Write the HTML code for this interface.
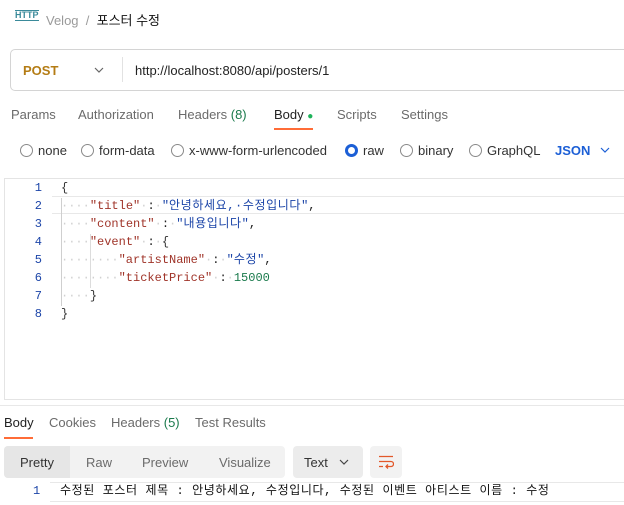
<!DOCTYPE html>
<html><head><meta charset="utf-8"><style>
*{margin:0;padding:0;box-sizing:border-box}
body{width:624px;height:505px;background:#fff;font-family:"Liberation Sans","Noto Sans CJK KR",sans-serif;font-size:13px;color:#212121;position:relative;overflow:hidden}
.a{position:absolute;white-space:nowrap}
.g{color:#6b6b6b}
.mono{font-family:"Liberation Mono","Noto Sans CJK KR",monospace;font-size:12px;line-height:18px}
.rad{display:inline-block;width:13px;height:13px;border:1px solid #8a8a8a;border-radius:50%;vertical-align:-2px;margin-right:5px}
.k{color:#a0352a}.s{color:#1c45a8}.n{color:#1a7a4c}.d{color:#d0d0d0}
.ko{letter-spacing:0.6px}
.ln{position:absolute;left:20px;width:22px;text-align:right;color:#1c45a8}
.cl{position:absolute;left:61px}
</style></head><body>
<div class="a" style="left:15px;top:10px;font-size:9px;color:#3a8a9a;font-weight:bold;border-top:1px solid #3a8a9a;border-bottom:1px solid #3a8a9a;line-height:9px">HTTP</div>
<div class="a" style="left:46px;top:10px;font-size:13px"><span style="color:#9a9a9a">Velog</span><span style="color:#9a9a9a">&nbsp; / &nbsp;</span><span style="color:#111">포스터 수정</span></div>

<div class="a" style="left:10px;top:49px;width:630px;height:42px;border:1px solid #d4d4d4;border-radius:5px"></div>
<div class="a" style="left:23px;top:63px;font-weight:bold;color:#b47c14">POST</div>
<svg class="a" style="left:94px;top:67px" width="10" height="6"><path d="M1 1l4 4 4-4" fill="none" stroke="#666" stroke-width="1.2"/></svg>
<div class="a" style="left:122px;top:57px;width:1px;height:25px;background:#e2e2e2"></div>
<div class="a" style="left:135px;top:63px;color:#222">http://localhost:8080/api/posters/1</div>

<div class="a g" style="left:11px;top:107px">Params</div>
<div class="a g" style="left:78px;top:107px">Authorization</div>
<div class="a g" style="left:178px;top:107px">Headers <span style="color:#1a7a4c">(8)</span></div>
<div class="a" style="left:274px;top:107px;color:#222">Body <span style="color:#1eb35a;font-size:10px">●</span></div>
<div class="a" style="left:274px;top:128px;width:39px;height:2px;background:#ff6c37"></div>
<div class="a g" style="left:337px;top:107px">Scripts</div>
<div class="a g" style="left:401px;top:107px">Settings</div>

<div class="a" style="left:20px;top:143px;color:#333"><span class="rad"></span>none</div>
<div class="a" style="left:81px;top:143px;color:#333"><span class="rad"></span>form-data</div>
<div class="a" style="left:171px;top:143px;color:#333"><span class="rad"></span>x-www-form-urlencoded</div>
<div class="a" style="left:345px;top:143px;color:#333"><span class="rad" style="border:3.5px solid #1c5fd6"></span>raw</div>
<div class="a" style="left:400px;top:143px;color:#333"><span class="rad"></span>binary</div>
<div class="a" style="left:469px;top:143px;color:#333"><span class="rad"></span>GraphQL</div>
<div class="a" style="left:555px;top:143px;color:#1c5fd6;font-weight:bold">JSON</div>
<svg class="a" style="left:600px;top:147px" width="10" height="6"><path d="M1 1l4 4 4-4" fill="none" stroke="#1c5fd6" stroke-width="1.2"/></svg>

<div class="a" style="left:4px;top:178px;width:640px;height:222px;border:1px solid #e4e4e4"></div>
<div class="a" style="left:52px;top:196px;width:600px;height:18px;border-top:1px solid #e8e8e8;border-bottom:1px solid #e8e8e8"></div>
<div class="a" style="left:61px;top:198px;width:1px;height:108px;background:#cfcfcf"></div>
<div class="a" style="left:90px;top:234px;width:1px;height:54px;background:#dcdcdc"></div>
<div class="mono">
<div class="ln" style="top:179px">1</div><div class="cl" style="top:179px;color:#333">{</div>
<div class="ln" style="top:197px">2</div><div class="cl" style="top:197px"><span class="d">····</span><span class="k">"title"</span><span class="d">·</span>:<span class="d">·</span><span class="s">"<span class="ko">안녕하세요,·수정입니다</span>"</span>,</div>
<div class="ln" style="top:215px">3</div><div class="cl" style="top:215px"><span class="d">····</span><span class="k">"content"</span><span class="d">·</span>:<span class="d">·</span><span class="s">"<span class="ko">내용입니다</span>"</span>,</div>
<div class="ln" style="top:233px">4</div><div class="cl" style="top:233px"><span class="d">····</span><span class="k">"event"</span><span class="d">·</span>:<span class="d">·</span><span style="color:#333">{</span></div>
<div class="ln" style="top:251px">5</div><div class="cl" style="top:251px"><span class="d">········</span><span class="k">"artistName"</span><span class="d">·</span>:<span class="d">·</span><span class="s">"<span class="ko">수정</span>"</span>,</div>
<div class="ln" style="top:269px">6</div><div class="cl" style="top:269px"><span class="d">········</span><span class="k">"ticketPrice"</span><span class="d">·</span>:<span class="d">·</span><span class="n">15000</span></div>
<div class="ln" style="top:287px">7</div><div class="cl" style="top:287px"><span class="d">····</span><span style="color:#333">}</span></div>
<div class="ln" style="top:305px">8</div><div class="cl" style="top:305px;color:#333">}</div>
</div>

<div class="a" style="left:0;top:405px;width:624px;height:1px;background:#e8e8e8"></div>
<div class="a" style="left:4px;top:415px;color:#222">Body</div>
<div class="a" style="left:4px;top:437px;width:29px;height:2px;background:#ff6c37"></div>
<div class="a g" style="left:49px;top:415px">Cookies</div>
<div class="a g" style="left:111px;top:415px">Headers <span style="color:#1a7a4c">(5)</span></div>
<div class="a g" style="left:195px;top:415px">Test Results</div>

<div class="a" style="left:4px;top:446px;width:281px;height:32px;background:#f2f2f2;border-radius:4px"></div>
<div class="a" style="left:4px;top:446px;width:66px;height:32px;background:#e6e6e6;border-radius:4px 0 0 4px"></div>
<div class="a" style="left:20px;top:455px;color:#333">Pretty</div>
<div class="a g" style="left:86px;top:455px">Raw</div>
<div class="a g" style="left:142px;top:455px">Preview</div>
<div class="a g" style="left:219px;top:455px">Visualize</div>
<div class="a" style="left:293px;top:446px;width:70px;height:32px;background:#ececec;border-radius:4px"></div>
<div class="a" style="left:304px;top:455px;color:#333">Text</div>
<svg class="a" style="left:339px;top:459px" width="10" height="6"><path d="M1 1l4 4 4-4" fill="none" stroke="#444" stroke-width="1.2"/></svg>
<div class="a" style="left:370px;top:446px;width:32px;height:32px;background:#f2f2f2;border-radius:4px"></div>
<svg class="a" style="left:378px;top:455px" width="16" height="14"><path d="M1 1.5h14M1 6.5h12a2.5 2.5 0 0 1 0 5H8M10 9.5l-2 2 2 2M1 11.5h4" fill="none" stroke="#e2582a" stroke-width="1.3"/></svg>

<div class="a" style="left:50px;top:482px;width:580px;height:20px;border-top:1px solid #e8e8e8;border-bottom:1px solid #e8e8e8"></div>
<div class="mono a" style="left:33px;top:482px;color:#1c45a8">1</div>
<div class="mono a ko" style="left:60px;top:482px;color:#111">수정된 포스터 제목 : 안녕하세요, 수정입니다, 수정된 이벤트 아티스트 이름 : 수정</div>
</body></html>
